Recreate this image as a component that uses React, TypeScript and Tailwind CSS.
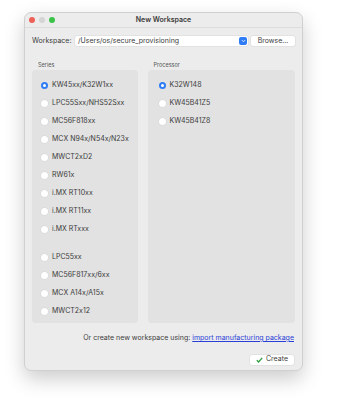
import React from 'react';

const series = [
  'KW45xx/K32W1xx',
  'LPC55Sxx/NHS52Sxx',
  'MC56F818xx',
  'MCX N94x/N54x/N23x',
  'MWCT2xD2',
  'RW61x',
  'i.MX RT10xx',
  'i.MX RT11xx',
  'i.MX RTxxx',
];

const series2 = ['LPC55xx', 'MC56F817xx/6xx', 'MCX A14x/A15x', 'MWCT2x12'];

const processors = ['K32W148', 'KW45B41Z5', 'KW45B41Z8'];

const Radio = ({ checked }: { checked?: boolean }) =>
  checked ? (
    <span className="w-[7px] h-[7px] rounded-full bg-[#2f7cf6] flex items-center justify-center shrink-0">
      <span className="w-[3px] h-[3px] rounded-full bg-white" />
    </span>
  ) : (
    <span className="w-[7px] h-[7px] rounded-full bg-white shadow-[0_0_0_0.5px_#d4d4d4] shrink-0" />
  );

const Row = ({ label, checked }: { label: string; checked?: boolean }) => (
  <div className="h-[18px] flex items-center gap-[4px] text-[7px] text-[#3c3c3c]">
    <Radio checked={checked} />
    <span>{label}</span>
  </div>
);

const App: React.FC = () => {
  return (
    <div className="w-[364px] h-[400px] bg-white pt-[12px] pl-[24px] font-['Inter','Liberation_Sans',sans-serif] [font-variant-ligatures:no-contextual]">
      <div className="w-[279px] h-[359px] bg-[#ececec] rounded-[7px] border border-[#d0d0d0] shadow-[0_8px_20px_rgba(0,0,0,0.2)] flex flex-col">
        <div className="h-[15px] relative flex items-center justify-center border-b border-[#dcdcdc]">
          <div className="absolute left-[4px] top-[4px] flex gap-[4px]">
            <span className="w-[6px] h-[6px] rounded-full bg-[#ee5f57]" />
            <span className="w-[6px] h-[6px] rounded-full bg-[#d4d4d4]" />
            <span className="w-[6px] h-[6px] rounded-full bg-[#3bc348]" />
          </div>
          <span className="text-[7px] font-semibold text-[#3a3a3a]">New Workspace</span>
        </div>

        <div className="flex items-center mt-[8px] px-[7px] h-[10px]">
          <span className="text-[7px] text-[#3c3c3c] w-[43px]">Workspace:</span>
          <div className="w-[173px] h-[10px] bg-white rounded-[2px] flex items-center justify-between pl-[3px] pr-[1px] shadow-[0_0_0_0.5px_#d8d8d8]">
            <span className="text-[7px] text-[#3c3c3c]">/Users/os/secure_provisioning</span>
            <span className="w-[8px] h-[8px] rounded-[2px] bg-[#2f7cf6] flex items-center justify-center">
              <svg width="5" height="4" viewBox="0 0 5 4"><path d="M1 1.2 L2.5 2.7 L4 1.2" stroke="white" strokeWidth="0.9" fill="none" /></svg>
            </span>
          </div>
          <div className="ml-[3px] w-[44px] h-[10px] bg-white rounded-[2px] flex items-center justify-center text-[7px] text-[#3c3c3c] shadow-[0_0_0_0.5px_#d8d8d8]">
            Browse...
          </div>
        </div>

        <div className="flex gap-[10px] px-[7px] mt-[15px]">
          <div className="w-[106px] flex flex-col">
            <span className="text-[5.5px] text-[#555] pl-[6px] h-[9px] leading-[9px]">Series</span>
            <div className="h-[253px] bg-[#e2e2e2] rounded-[4px] pl-[9px] pt-[6px]">
              {series.map((s, i) => (
                <Row key={s} label={s} checked={i === 0} />
              ))}
              <div className="h-[10px]" />
              {series2.map((s) => (
                <Row key={s} label={s} />
              ))}
            </div>
          </div>
          <div className="w-[148px] flex flex-col">
            <span className="text-[5.5px] text-[#555] pl-[6px] h-[9px] leading-[9px]">Processor</span>
            <div className="h-[253px] bg-[#e2e2e2] rounded-[4px] pl-[11px] pt-[6px]">
              {processors.map((p, i) => (
                <Row key={p} label={p} checked={i === 0} />
              ))}
            </div>
          </div>
        </div>

        <div className="flex justify-end px-[8px] mt-[10px] text-[7px] text-[#3c3c3c]">
          <span>Or create new workspace using:&nbsp;</span>
          <span className="text-[#2a3fd8] underline">import manufacturing package</span>
        </div>

        <div className="flex justify-end px-[8px] mt-[11px]">
          <div className="w-[44px] h-[10px] bg-white rounded-[2px] flex items-center justify-center gap-[3px] text-[7px] text-[#3c3c3c] shadow-[0_0_0_0.5px_#d8d8d8]">
            <svg width="7" height="6" viewBox="0 0 7 6"><path d="M0.8 3.2 L2.6 5 L6.2 0.8" stroke="#2e9e3e" strokeWidth="1.3" fill="none" /></svg>
            Create
          </div>
        </div>
      </div>
    </div>
  );
};

export default App;
